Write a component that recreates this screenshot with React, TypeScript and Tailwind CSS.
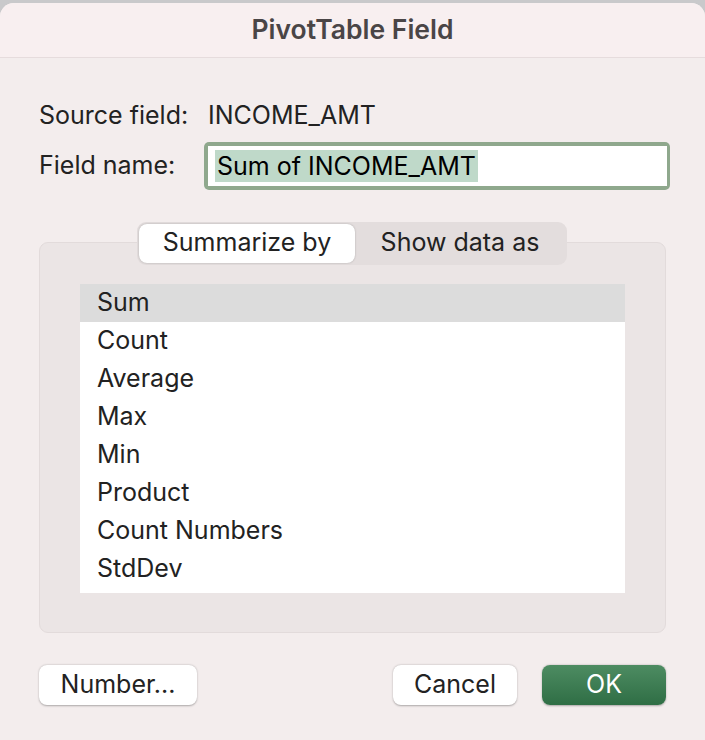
import { useState } from 'react'

const functions = [
  'Sum',
  'Count',
  'Average',
  'Max',
  'Min',
  'Product',
  'Count Numbers',
  'StdDev',
]

export default function App() {
  const [tab, setTab] = useState<'summarize' | 'show'>('summarize')
  const [selected, setSelected] = useState('Sum')

  return (
    <div
      className="h-[740px] w-[705px] overflow-hidden bg-[#c9c9cb] pt-[3px]"
      style={{ fontFamily: 'Inter, "Liberation Sans", sans-serif' }}
    >
      <div className="flex h-[760px] flex-col rounded-[14px] bg-[#f3eded] text-[#222]">
        {/* title bar */}
        <div className="flex h-[55px] items-center justify-center rounded-t-[14px] border-b border-[#e6dcdd] bg-[#f8eff0]">
          <h1 className="text-[26.5px] font-semibold text-[#4a4546]">
            PivotTable Field
          </h1>
        </div>

        <div className="px-[39px] pt-[39px]">
          <div className="flex items-center text-[25px]">
            <span className="w-[169px]">Source field:</span>
            <span>INCOME_AMT</span>
          </div>

          <div className="-mr-[4px] mt-[7px] flex items-center text-[25px]">
            <span className="w-[165px]">Field name:</span>
            <div className="flex h-[48px] flex-1 items-center rounded-[5px] bg-[#8fa88d] p-[4px] pr-[3px]">
              <div className="flex h-full w-full items-center bg-white pl-[7px]">
                <span className="bg-[#bfd9c9] px-[2px] leading-[32px] text-black">
                  Sum of INCOME_AMT
                </span>
              </div>
            </div>
          </div>

          {/* group box with tabs */}
          <div className="relative mt-[52px] h-[391px] rounded-[9px] border border-[#e2dbdb] bg-[#ebe5e5]">
            <div className="absolute left-[97px] top-[-21px] flex h-[43px] w-[430px] items-center rounded-[9px] bg-[#e3dddd] p-[2px] text-[25px]">
              <button
                onClick={() => setTab('summarize')}
                className={
                  tab === 'summarize'
                    ? 'h-full w-[216px] rounded-[8px] bg-white shadow-[0_0_2px_rgba(0,0,0,0.25)]'
                    : 'h-full w-[216px] rounded-[8px]'
                }
              >
                Summarize by
              </button>
              <button
                onClick={() => setTab('show')}
                className={
                  tab === 'show'
                    ? 'h-full flex-1 rounded-[8px] bg-white shadow-[0_0_2px_rgba(0,0,0,0.25)]'
                    : 'h-full flex-1 rounded-[8px]'
                }
              >
                Show data as
              </button>
            </div>

            <ul className="mx-[40px] mt-[41px] h-[309px] bg-white text-[25px]">
              {functions.map((fn) => (
                <li
                  key={fn}
                  onClick={() => setSelected(fn)}
                  className={
                    selected === fn
                      ? 'flex h-[38px] items-center bg-[#dcdcdc] pl-[17px]'
                      : 'flex h-[38px] items-center pl-[17px]'
                  }
                >
                  {fn}
                </li>
              ))}
            </ul>
          </div>

          {/* buttons */}
          <div className="mt-[32px] flex items-center text-[25px]">
            <button className="h-[40px] w-[158px] rounded-[8px] bg-white shadow-[0_0.5px_2px_rgba(0,0,0,0.3)]">
              Number...
            </button>
            <button className="ml-auto h-[40px] w-[124px] rounded-[8px] bg-white shadow-[0_0.5px_2px_rgba(0,0,0,0.3)]">
              Cancel
            </button>
            <button className="ml-[25px] h-[40px] w-[124px] rounded-[8px] bg-gradient-to-b from-[#4d8c62] to-[#2f6e45] text-white shadow-[0_0.5px_2px_rgba(0,0,0,0.3)]">
              OK
            </button>
          </div>
        </div>
      </div>
    </div>
  )
}
